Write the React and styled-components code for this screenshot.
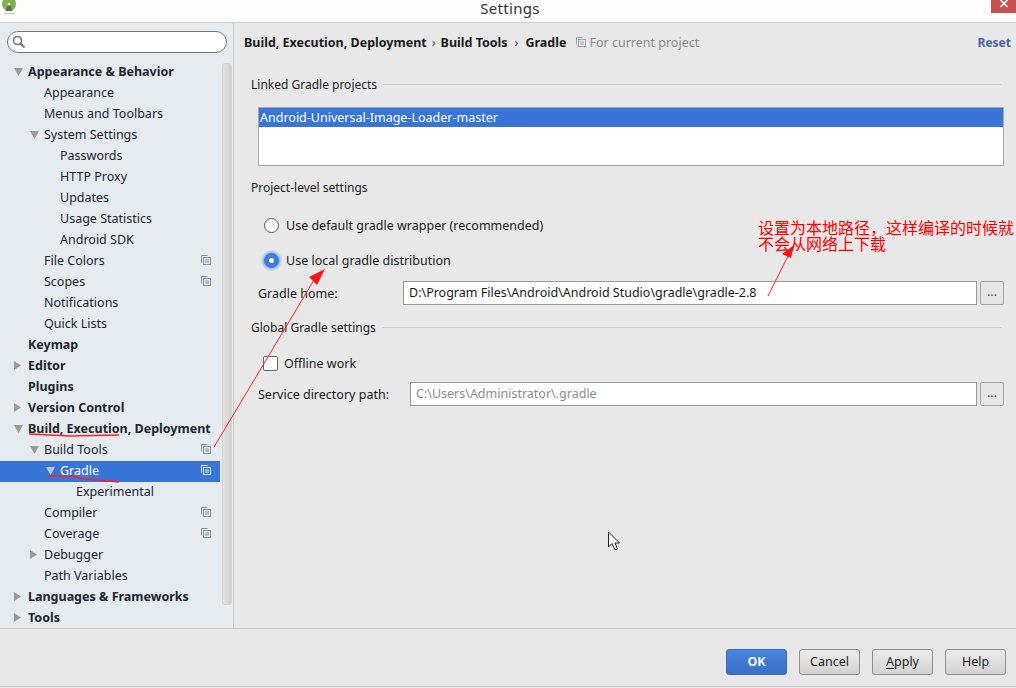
import styled, { createGlobalStyle } from "styled-components";

const GlobalStyle = createGlobalStyle`
  html, body {
    margin: 0;
    padding: 0;
    background: #e8e8e8;
  }
  body {
    font-family: "Noto Sans", "Open Sans", sans-serif;
    font-size: 12.5px;
    color: #1a1a1a;
  }
`;

const Window = styled.div`
  position: relative;
  width: 1016px;
  height: 688px;
  display: flex;
  flex-direction: column;
  overflow: hidden;
  background: #e8e8e8;
`;

const TitleBar = styled.div`
  position: relative;
  flex: 0 0 23px;
  box-sizing: border-box;
  display: flex;
  align-items: flex-start;
  justify-content: center;
  padding-left: 4px;
  background: #fdfdfd;
  border-bottom: 1px solid #cfcfcf;
`;

const Title = styled.div`
  font-size: 15px;
  line-height: 17px;
  letter-spacing: 0.3px;
  white-space: nowrap;
  color: #333;
`;

const AppLogo = styled.svg`
  position: absolute;
  left: 2px;
  top: 0;
`;

const CloseBox = styled.div`
  position: absolute;
  right: 0;
  top: 0;
  width: 25px;
  height: 13px;
  background: #c75050;
  color: #fff;
  display: flex;
  justify-content: center;
`;

const Body = styled.div`
  flex: 1;
  display: flex;
  min-height: 0;
`;

const Sidebar = styled.div`
  position: relative;
  flex: 0 0 234px;
  box-sizing: border-box;
  background: #e6ebf0;
  border-right: 1px solid #c9c9c9;
  padding-top: 8px;
`;

const SearchBox = styled.div`
  box-sizing: border-box;
  width: 220px;
  height: 22px;
  margin-left: 7px;
  margin-bottom: 9px;
  padding-left: 4px;
  display: flex;
  align-items: center;
  background: #fff;
  border: 1px solid #777;
  border-radius: 11px;
`;

const Tree = styled.div`
  width: 220px;
`;

const Row = styled.div`
  position: relative;
  height: 21px;
  line-height: 19px;
  white-space: nowrap;
  padding-left: ${(p) => 28 + p.$level * 16}px;
  font-weight: ${(p) => (p.$bold ? 700 : 400)};
  background: ${(p) => (p.$selected ? "#3875d7" : "transparent")};
  color: ${(p) => (p.$selected ? "#fff" : "#1c2530")};
`;

const Arrow = styled.svg`
  position: absolute;
  left: ${(p) => 13 + p.$level * 16}px;
  top: 5px;
`;

const CopyBadge = styled.svg`
  position: absolute;
  right: 9px;
  top: 4px;
`;

const ScrollBar = styled.div`
  position: absolute;
  left: 222px;
  top: 40px;
  width: 10px;
  height: 542px;
  border-radius: 3px;
  background: linear-gradient(to right, #e2e2e2, #d0d0d0);
  border: 1px solid #d4d4d4;
  box-sizing: border-box;
`;

const Content = styled.div`
  flex: 1;
  padding: 0 14px 0 17px;
  min-width: 0;
`;

const Crumbs = styled.div`
  height: 38px;
  margin-left: -7px;
  margin-right: -9px;
  display: flex;
  align-items: center;
  white-space: nowrap;
  font-weight: 700;
  color: #1a1a1a;
`;

const CrumbSep = styled.span`
  font-weight: 400;
  margin: 0 ${(p) => p.$gap}px;
  color: #444;
`;

const Scope = styled.span`
  display: flex;
  align-items: center;
  gap: 3px;
  margin-left: 10px;
  font-weight: 400;
  color: #8a8a8a;
`;

const Reset = styled.span`
  margin-left: auto;
  color: #4a66a8;
  font-weight: 700;
  font-size: 12px;
`;

const Group = styled.div`
  display: flex;
  align-items: center;
  gap: 6px;
  height: 18px;
  margin-top: ${(p) => p.$top}px;
  white-space: nowrap;
  font-size: 12px;
  color: #222;

  &::after {
    content: "";
    flex: 1;
    height: 1px;
    background: ${(p) => (p.$line ? "#cdcdcd" : "transparent")};
  }
`;

const ProjectList = styled.div`
  box-sizing: border-box;
  height: 59px;
  margin: 14px -2px 0 7px;
  background: #fff;
  border: 1px solid #a9a9a9;
`;

const ProjectRow = styled.div`
  height: 19px;
  line-height: 19px;
  padding-left: 1px;
  background: #3875d7;
  color: #fff;
`;

const RadioRow = styled.div`
  display: flex;
  align-items: center;
  height: 20px;
  margin: ${(p) => p.$top}px 0 0 13px;
  gap: 7px;
`;

const Radio = styled.span`
  box-sizing: border-box;
  width: 15px;
  height: 15px;
  border-radius: 50%;
  display: flex;
  align-items: center;
  justify-content: center;
  background: ${(p) => (p.$checked ? "#3f7bd8" : "#fff")};
  border: 1px solid ${(p) => (p.$checked ? "#3f7bd8" : "#555")};
  box-shadow: ${(p) => (p.$checked ? "0 0 2px 2px #9dbce8" : "none")};

  &::after {
    content: "";
    display: ${(p) => (p.$checked ? "block" : "none")};
    width: 5px;
    height: 5px;
    border-radius: 50%;
    background: #fff;
  }
`;

const FieldRow = styled.div`
  display: flex;
  align-items: center;
  height: 24px;
  margin: ${(p) => p.$top}px -2px 0 7px;
`;

const FieldLabel = styled.span`
  flex: 0 0 ${(p) => p.$width}px;
  white-space: nowrap;
`;

const Input = styled.div`
  flex: 1;
  box-sizing: border-box;
  height: 24px;
  line-height: 22px;
  padding-left: 5px;
  background: #fff;
  border: 1px solid #999;
  color: ${(p) => (p.$disabled ? "#8c8c8c" : "#1a1a1a")};
`;

const BrowseButton = styled.div`
  flex: 0 0 24px;
  box-sizing: border-box;
  height: 24px;
  margin-left: 3px;
  line-height: 20px;
  text-align: center;
  border: 1px solid #a4a4a4;
  border-radius: 2px;
  background: #e6e6e6;
  color: #444;
`;

const CheckRow = styled.div`
  display: flex;
  align-items: center;
  height: 20px;
  margin: 17px 0 0 12px;
  gap: 6px;
`;

const CheckBox = styled.span`
  box-sizing: border-box;
  width: 15px;
  height: 15px;
  border: 1px solid #666;
  border-radius: 2px;
  background: #fff;
`;

const Footer = styled.div`
  flex: 0 0 59px;
  box-sizing: border-box;
  margin-bottom: 1px;
  display: flex;
  justify-content: flex-end;
  gap: 12px;
  padding: 20px 10px 0 0;
  background: #e8e8e8;
  border-top: 1px solid #c9c9c9;
  border-bottom: 1px solid #c9c9c9;
`;

const Button = styled.div`
  box-sizing: border-box;
  width: 61px;
  height: 26px;
  line-height: 24px;
  text-align: center;
  border-radius: 3px;
  border: 1px solid ${(p) => (p.$primary ? "#3c6cb8" : "#8f8f8f")};
  font-weight: ${(p) => (p.$primary ? 700 : 400)};
  color: ${(p) => (p.$primary ? "#f4f7fc" : "#222")};
  background: ${(p) =>
    p.$primary
      ? "linear-gradient(#4a84dc, #3a6fc8)"
      : "linear-gradient(#ededed, #d2d2d2)"};

  u {
    text-underline-offset: 2px;
  }
`;

const Notes = styled.svg`
  position: absolute;
  left: 0;
  top: 0;
  pointer-events: none;
`;

const Callout = styled.div`
  position: absolute;
  left: 758px;
  top: 219px;
  font-family: "Noto Sans CJK SC", sans-serif;
  font-size: 16px;
  line-height: 16px;
  color: #ff0000;
  white-space: nowrap;
`;

const Cursor = styled.svg`
  position: absolute;
  left: 607px;
  top: 531px;
`;

const treeRows = [
  { label: "Appearance & Behavior", level: 0, bold: true, arrow: "down" },
  { label: "Appearance", level: 1 },
  { label: "Menus and Toolbars", level: 1 },
  { label: "System Settings", level: 1, arrow: "down" },
  { label: "Passwords", level: 2 },
  { label: "HTTP Proxy", level: 2 },
  { label: "Updates", level: 2 },
  { label: "Usage Statistics", level: 2 },
  { label: "Android SDK", level: 2 },
  { label: "File Colors", level: 1, copy: true },
  { label: "Scopes", level: 1, copy: true },
  { label: "Notifications", level: 1 },
  { label: "Quick Lists", level: 1 },
  { label: "Keymap", level: 0, bold: true },
  { label: "Editor", level: 0, bold: true, arrow: "right" },
  { label: "Plugins", level: 0, bold: true },
  { label: "Version Control", level: 0, bold: true, arrow: "right" },
  { label: "Build, Execution, Deployment", level: 0, bold: true, arrow: "down" },
  { label: "Build Tools", level: 1, arrow: "down", copy: true },
  { label: "Gradle", level: 2, arrow: "down", copy: true, selected: true },
  { label: "Experimental", level: 3 },
  { label: "Compiler", level: 1, copy: true },
  { label: "Coverage", level: 1, copy: true },
  { label: "Debugger", level: 1, arrow: "right" },
  { label: "Path Variables", level: 1 },
  { label: "Languages & Frameworks", level: 0, bold: true, arrow: "right" },
  { label: "Tools", level: 0, bold: true, arrow: "right" },
];

// little stacked-pages mark used for project level settings
const CopyIcon = ({ color = "#7f94a8" }) => (
  <>
    <path d="M0.5 7.5V0.5H6.5" fill="none" stroke={color} />
    <rect x="2.5" y="2.5" width="7" height="7" fill="none" stroke={color} />
    <path d="M4 5H8M4 7H8" stroke={color} />
  </>
);

const TreeRow = ({ row }) => (
  <Row $level={row.level} $bold={row.bold} $selected={row.selected}>
    {row.arrow && (
      <Arrow $level={row.level} width="11" height="10" viewBox="0 0 11 10">
        {row.arrow === "down" ? (
          <path d="M1 1H10L5.5 9Z" fill={row.selected ? "#b9c4d2" : "#9a9a9a"} />
        ) : (
          <path d="M1 0V9L8 4.5Z" fill="#9a9a9a" />
        )}
      </Arrow>
    )}
    {row.label}
    {row.copy && (
      <CopyBadge width="10" height="10" viewBox="0 0 10 10">
        <CopyIcon color={row.selected ? "#dfe8f6" : "#7f94a8"} />
      </CopyBadge>
    )}
  </Row>
);

export default function App() {
  return (
    <Window>
      <GlobalStyle />
      <TitleBar>
        <AppLogo width="16" height="15" viewBox="0 0 16 15">
          <circle cx="7" cy="4" r="7" fill="#7cb342" />
          <path d="M7 2L10.5 11H3.5Z" fill="#5d6b57" />
          <circle cx="7" cy="4" r="1.5" fill="#e4ebd8" />
          <path d="M2 13.5L12 13.5" stroke="#c5d5a8" strokeWidth="1.5" />
        </AppLogo>
        <Title>Settings</Title>
        <CloseBox>
          <svg width="10" height="10" viewBox="0 0 10 10">
            <path d="M1.5 0L8.5 7M8.5 0L1.5 7" stroke="#fff" strokeWidth="1.6" />
          </svg>
        </CloseBox>
      </TitleBar>
      <Body>
        <Sidebar>
          <SearchBox>
            <svg width="14" height="14" viewBox="0 0 14 14">
              <circle cx="5.5" cy="5.5" r="4" fill="none" stroke="#777" strokeWidth="1.6" />
              <path d="M8.5 8.5L12.5 12.5" stroke="#777" strokeWidth="2" />
            </svg>
          </SearchBox>
          <Tree>
            {treeRows.map((row) => (
              <TreeRow key={row.label} row={row} />
            ))}
          </Tree>
          <ScrollBar />
        </Sidebar>
        <Content>
          <Crumbs>
            Build, Execution, Deployment
            <CrumbSep $gap={5}>›</CrumbSep>
            Build Tools
            <CrumbSep $gap={7}>›</CrumbSep>
            Gradle
            <Scope>
              <svg width="10" height="10" viewBox="0 0 10 10">
                <CopyIcon color="#9aa4ae" />
              </svg>
              For current project
            </Scope>
            <Reset>Reset</Reset>
          </Crumbs>
          <Group $top={14} $line>Linked Gradle projects</Group>
          <ProjectList>
            <ProjectRow>Android-Universal-Image-Loader-master</ProjectRow>
          </ProjectList>
          <Group $top={12}>Project-level settings</Group>
          <RadioRow $top={19}>
            <Radio />
            Use default gradle wrapper (recommended)
          </RadioRow>
          <RadioRow $top={15}>
            <Radio $checked />
            Use local gradle distribution
          </RadioRow>
          <FieldRow $top={11}>
            <FieldLabel $width={145}>Gradle home:</FieldLabel>
            <Input>D:\Program Files\Android\Android Studio\gradle\gradle-2.8</Input>
            <BrowseButton>...</BrowseButton>
          </FieldRow>
          <Group $top={13} $line>Global Gradle settings</Group>
          <CheckRow>
            <CheckBox />
            Offline work
          </CheckRow>
          <FieldRow $top={9}>
            <FieldLabel $width={152}>Service directory path:</FieldLabel>
            <Input $disabled>C:\Users\Administrator\.gradle</Input>
            <BrowseButton>...</BrowseButton>
          </FieldRow>
        </Content>
      </Body>
      <Footer>
        <Button $primary>OK</Button>
        <Button>Cancel</Button>
        <Button>
          <u>A</u>pply
        </Button>
        <Button>Help</Button>
      </Footer>

      {/* hand drawn annotations on top of the screenshot */}
      <Notes width="1016" height="688" viewBox="0 0 1016 688">
        <g fill="none" stroke="#ff2020">
          <path d="M214 447L317 275" />
          <path d="M768 296L790 252" />
          <path d="M29 434L50 435L70 436L119 435" strokeWidth="1.3" />
          <path d="M48 476L70 476L85 479L108 481L119 482" strokeWidth="1.3" />
        </g>
        <path d="M325 269L317 285L309 277Z" fill="#ff1515" />
        <path d="M794 245L791 258L782 254Z" fill="#ff1515" />
      </Notes>
      <Callout>
        设置为本地路径，这样编译的时候就
        <br />
        不会从网络上下载
      </Callout>
      <Cursor width="14" height="21" viewBox="0 0 14 21">
        <path d="M1.5 1V16L5 12.5L8 19L10.5 18L8 12H12.5Z" fill="#fff" stroke="#222" />
      </Cursor>
    </Window>
  );
}
